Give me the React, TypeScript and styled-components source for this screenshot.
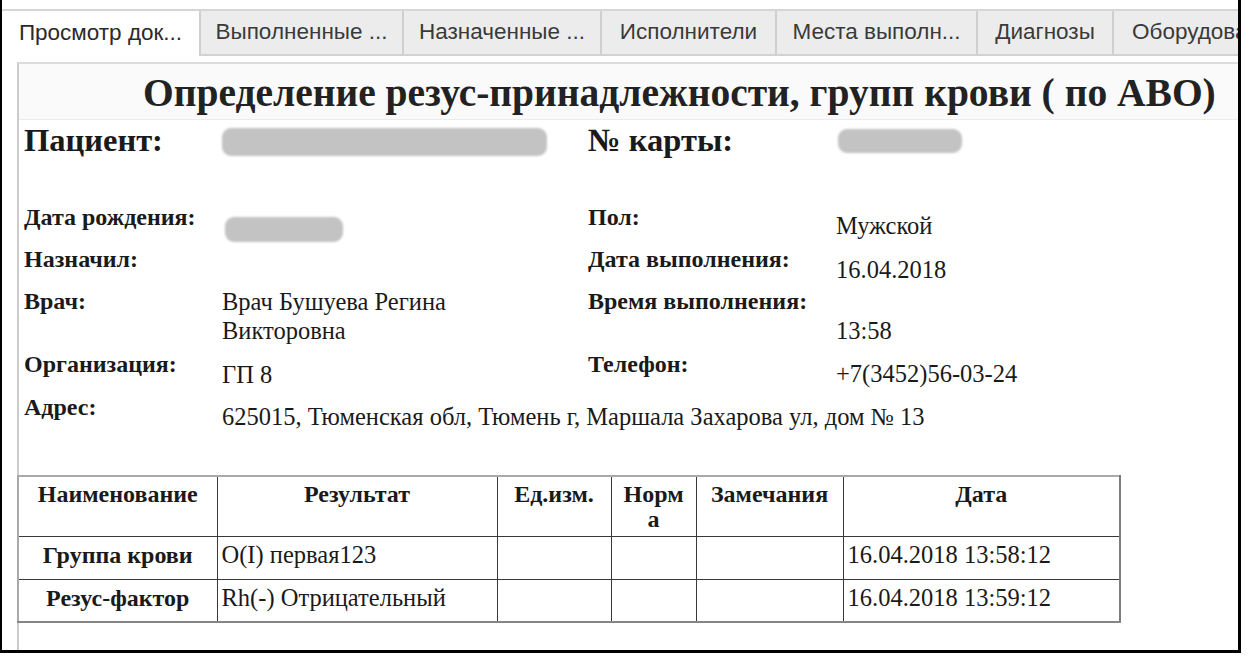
import React from "react";
import styled, { createGlobalStyle } from "styled-components";

const GlobalStyle = createGlobalStyle`
  html, body {
    margin: 0;
    padding: 0;
    background: #fff;
  }
`;

const tabs = [
  { title: "Просмотр док...", w: 197, active: true },
  { title: "Выполненные ...", w: 203 },
  { title: "Назначенные ...", w: 198 },
  { title: "Исполнители", w: 175 },
  { title: "Места выполн...", w: 201 },
  { title: "Диагнозы", w: 136 },
  { title: "Оборудование", w: 180 },
];

const rows = [
  { name: "Группа крови", result: "O(I) первая123", date: "16.04.2018 13:58:12" },
  { name: "Резус-фактор", result: "Rh(-) Отрицательный", date: "16.04.2018 13:59:12" },
];

const App = () => {
  return (
    <>
      <GlobalStyle />
      <Frame>
        <TabStrip>
          {tabs.map((t) => (
            <Tab key={t.title} $w={t.w} $active={!!t.active}>
              {t.title}
            </Tab>
          ))}
        </TabStrip>

        <Panel>
          <TitleBar>
            <Title>Определение резус-принадлежности, групп крови ( по АВО)</Title>
          </TitleBar>

          <Info>
            <InfoRow $h={83}>
              <BigLabel>Пациент:</BigLabel>
              <Cell $top={5}>
                <Blur $w={325} $h={28} />
              </Cell>
              <BigLabel>№ карты:</BigLabel>
              <Cell $top={6}>
                <Blur $w={124} $h={24} $ml={2} />
              </Cell>
            </InfoRow>

            <InfoRow $h={42}>
              <Label>Дата рождения:</Label>
              <Cell $top={11}>
                <Blur $w={118} $h={25} $ml={3} />
              </Cell>
              <Label>Пол:</Label>
              <Value $top={5}>Мужской</Value>
            </InfoRow>

            <InfoRow $h={42}>
              <Label>Назначил:</Label>
              <Value $top={7}></Value>
              <Label>Дата выполнения:</Label>
              <Value $top={7}>16.04.2018</Value>
            </InfoRow>

            <InfoRow $h={63}>
              <Label>Врач:</Label>
              <Value $top={-3}>
                Врач Бушуева Регина
                <br />
                Викторовна
              </Value>
              <Label>Время выполнения:</Label>
              <Value $top={26}>13:58</Value>
            </InfoRow>

            <InfoRow $h={43}>
              <Label>Организация:</Label>
              <Value $top={7}>ГП 8</Value>
              <Label>Телефон:</Label>
              <Value $top={6}>+7(3452)56-03-24</Value>
            </InfoRow>

            <InfoRow $h={79}>
              <Label>Адрес:</Label>
              <Value $top={6} $span>
                625015, Тюменская обл, Тюмень г, Маршала Захарова ул, дом № 13
              </Value>
            </InfoRow>
          </Info>

          <ResultTable>
            <colgroup>
              <col style={{ width: 199 }} />
              <col style={{ width: 280 }} />
              <col style={{ width: 114 }} />
              <col style={{ width: 85 }} />
              <col style={{ width: 147 }} />
              <col />
            </colgroup>
            <thead>
              <tr>
                <Th>Наименование</Th>
                <Th>Результат</Th>
                <Th>Ед.изм.</Th>
                <Th>
                  Норм
                  <br />а
                </Th>
                <Th>Замечания</Th>
                <Th>Дата</Th>
              </tr>
            </thead>
            <tbody>
              {rows.map((r) => (
                <tr key={r.name}>
                  <NameTd>{r.name}</NameTd>
                  <Td>{r.result}</Td>
                  <Td></Td>
                  <Td></Td>
                  <Td></Td>
                  <Td>{r.date}</Td>
                </tr>
              ))}
            </tbody>
          </ResultTable>
        </Panel>
      </Frame>
    </>
  );
};

export default App;

const Frame = styled.div`
  box-sizing: border-box;
  width: 1241px;
  height: 653px;
  border-left: 2px solid #000;
  border-right: 3px solid #000;
  border-bottom: 3px solid #000;
  padding-top: 9px;
  overflow: hidden;
  background: #fff;
`;

const TabStrip = styled.div`
  display: flex;
  height: 45px;
  border-top: 2px solid #d6d6d6;
  white-space: nowrap;
`;

const Tab = styled.div<{ $w: number; $active: boolean }>`
  box-sizing: border-box;
  flex: 0 0 ${(p) => p.$w}px;
  display: flex;
  align-items: center;
  justify-content: center;
  padding-bottom: 2px;
  overflow: hidden;
  font-family: "Liberation Sans", Arial, sans-serif;
  font-size: 22.5px;
  color: ${(p) => (p.$active ? "#2a2a2a" : "#3a3a3a")};
  background: ${(p) => (p.$active ? "#fff" : "#ececec")};
  border-left: ${(p) => (p.$active ? "none" : "2px solid #cfcfcf")};
  border-bottom: ${(p) => (p.$active ? "none" : "2px solid #d2d2d2")};
  &:last-child {
    justify-content: flex-start;
    padding-left: 18px;
  }
`;

const Panel = styled.div`
  margin-top: 6px;
  margin-left: 15px;
  border-left: 2px solid #cbcbcb;
  border-top: 2px solid #dcdcdc;
  height: 600px;
`;

const TitleBar = styled.div`
  height: 55px;
  background: #fafafa;
  border-bottom: 1px solid #ececec;
  padding-left: 124px;
  display: flex;
  align-items: center;
  white-space: nowrap;
`;

const Title = styled.div`
  font-family: "Liberation Serif", "Times New Roman", serif;
  font-weight: bold;
  font-size: 39.5px;
  color: #222;
  padding-top: 3px;
`;

const Info = styled.div`
  padding: 3px 0 0 5px;
  font-family: "Liberation Serif", "Times New Roman", serif;
  color: #1a1a1a;
`;

const InfoRow = styled.div<{ $h: number }>`
  display: grid;
  grid-template-columns: 198px 366px 248px 1fr;
  align-items: start;
  height: ${(p) => p.$h}px;
`;

const BigLabel = styled.div`
  font-size: 32.5px;
  font-weight: bold;
  line-height: 34px;
  white-space: nowrap;
`;

const Label = styled.div`
  font-size: 24px;
  font-weight: bold;
  line-height: 23px;
  white-space: nowrap;
`;

const Cell = styled.div<{ $top: number }>`
  padding-top: ${(p) => p.$top}px;
`;

const Value = styled.div<{ $top: number; $span?: boolean }>`
  font-size: 24.5px;
  line-height: 29px;
  margin-top: ${(p) => p.$top}px;
  grid-column: ${(p) => (p.$span ? "2 / 5" : "auto")};
  white-space: nowrap;
`;

const Blur = styled.div<{ $w: number; $h: number; $ml?: number }>`
  width: ${(p) => p.$w}px;
  height: ${(p) => p.$h}px;
  margin-left: ${(p) => p.$ml ?? 0}px;
  border-radius: 9px;
  background: #c3c3c3;
  filter: blur(1px);
`;

const ResultTable = styled.table`
  margin-left: -2px;
  width: 1104px;
  table-layout: fixed;
  border-collapse: collapse;
  border-top: 2px solid #a9a9a9;
  border-left: 2px solid #a9a9a9;
  border-right: 2px solid #7d7d7d;
  border-bottom: 2px solid #858585;
  font-family: "Liberation Serif", "Times New Roman", serif;
  color: #1a1a1a;
`;

const Th = styled.th`
  height: 60px;
  box-sizing: border-box;
  border: 1px solid #3a3a3a;
  vertical-align: top;
  padding: 5px 2px 0;
  font-size: 24px;
  line-height: 25px;
  font-weight: bold;
  text-align: center;
  white-space: nowrap;
`;

const Td = styled.td`
  height: 43px;
  box-sizing: border-box;
  border: 1px solid #3a3a3a;
  vertical-align: middle;
  padding: 0 4px 5px;
  font-size: 24.5px;
  line-height: 26px;
  white-space: nowrap;
`;

const NameTd = styled(Td)`
  font-weight: bold;
  font-size: 24px;
  text-align: center;
`;
